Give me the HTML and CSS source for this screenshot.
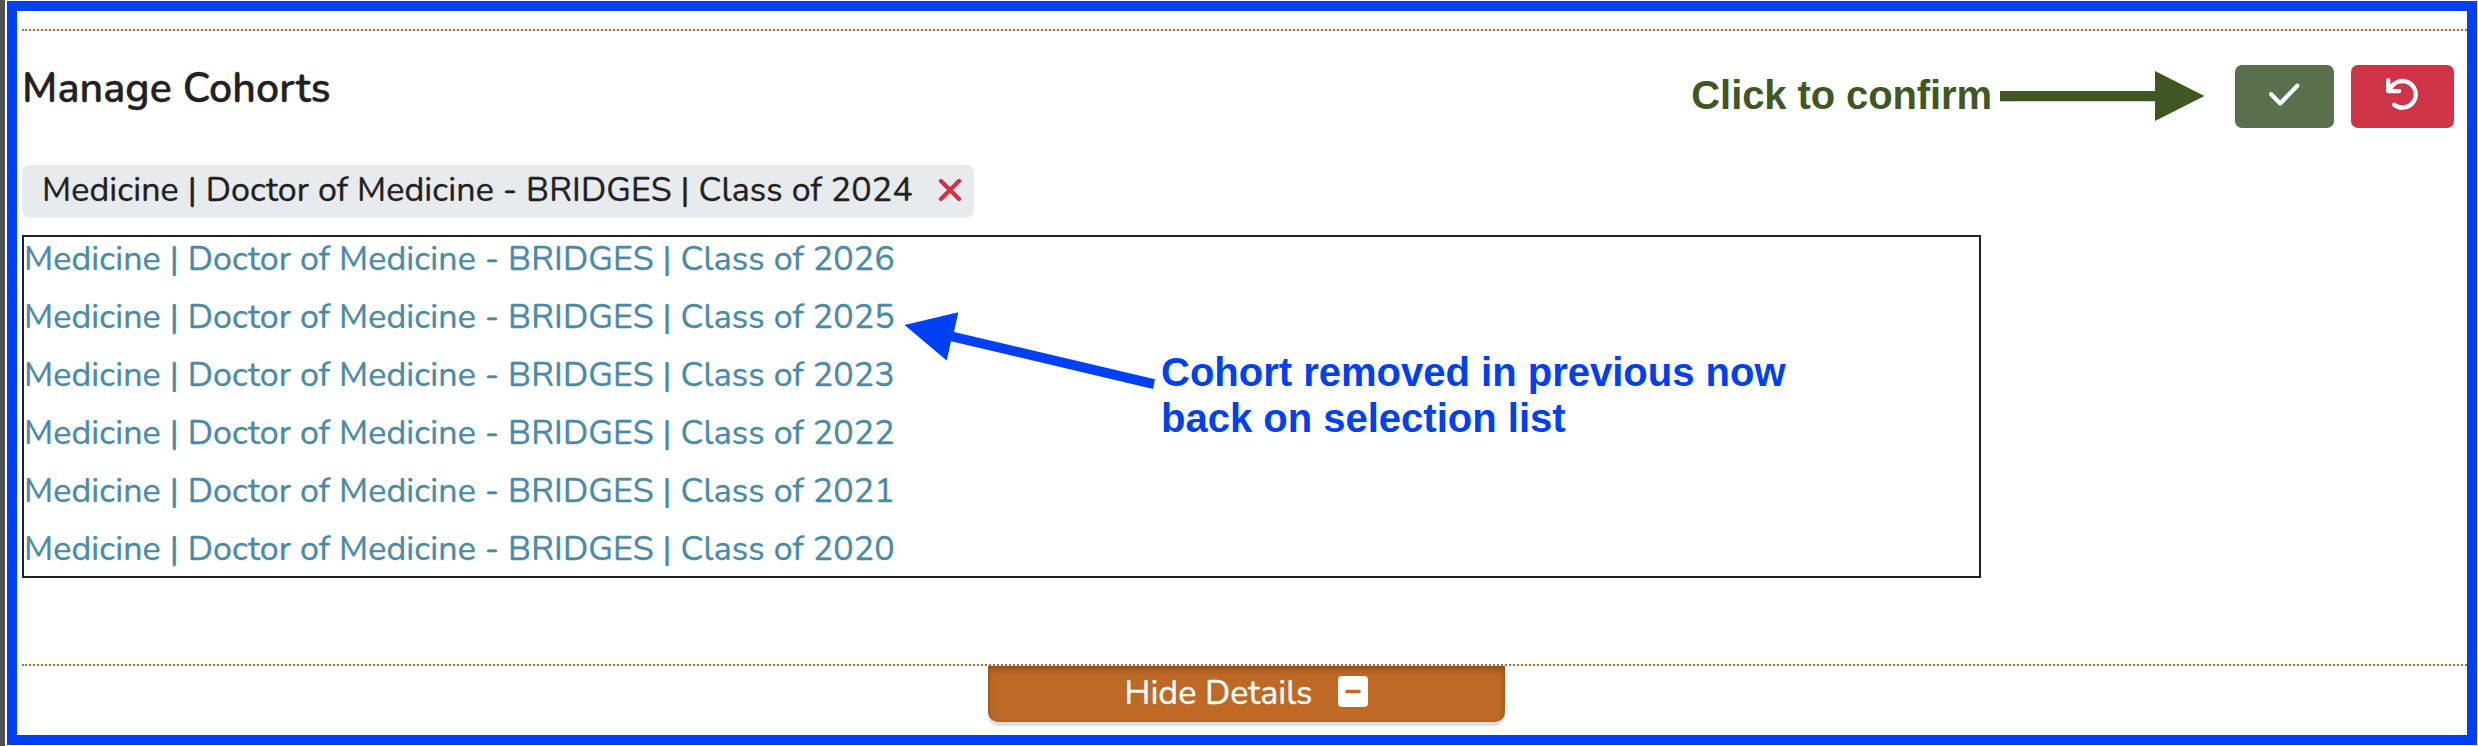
FILE: index.html
```html
<!DOCTYPE html>
<html lang="en">
<head>
<meta charset="utf-8">
<title>Manage Cohorts</title>
<link rel="stylesheet" href="styles.css">
</head>
<body>
<main class="frame">
  <section class="details">
    <header class="header">
      <h2 class="title">Manage Cohorts</h2>
      <div class="actions">
        <span class="hint">Click to confirm</span>
        <svg class="hint-arrow" width="205" height="50" viewBox="0 0 205 50"><path fill="#3f5724" d="M0 20h155V0l49.500 25L155 50V30.300H0z"/></svg>
        <button class="btn confirm" aria-label="Confirm"><svg width="40" height="40" viewBox="0 0 40 40"><path d="M6.200 19.300l9 9.200L32.300 10.800"/></svg></button>
        <button class="btn cancel" aria-label="Undo"><svg width="40" height="40" viewBox="0 0 40 40"><path d="M5.200 5.200v10.900h11M7 14.600A13.300 13.300 0 1 1 11.100 29.700"/></svg></button>
      </div>
    </header>
    <div class="tag"><span>Medicine | Doctor of Medicine - BRIDGES | Class of 2024</span><svg width="24" height="24" viewBox="0 0 24 24"><path d="M3 3l18 18M21 3L3 21"/></svg></div>
    <ul class="list">
      <li>Medicine | Doctor of Medicine - BRIDGES | Class of 2026</li>
      <li>Medicine | Doctor of Medicine - BRIDGES | Class of 2025</li>
      <li>Medicine | Doctor of Medicine - BRIDGES | Class of 2023</li>
      <li>Medicine | Doctor of Medicine - BRIDGES | Class of 2022</li>
      <li>Medicine | Doctor of Medicine - BRIDGES | Class of 2021</li>
      <li>Medicine | Doctor of Medicine - BRIDGES | Class of 2020</li>
    </ul>
  </section>
  <button class="toggle"><span>Hide Details</span><svg width="30" height="31" viewBox="0 0 30 31"><rect width="30" height="31" rx="4" fill="#fff"/><path d="M9 15.500h12" stroke="#be6926" stroke-width="3.600" stroke-linecap="round"/></svg></button>
</main>
<svg class="note-arrow" width="256" height="80" viewBox="900 310 256 80"><path fill="#0040f5" d="M904.500 325L958.300 312.200 954 332l201 47.300-2 9.700-202-47.800-4.300 19.400z"/></svg>
<p class="note">Cohort removed in previous now<br>back on selection list</p>
</body>
</html>
```
FILE: styles.css
```css
* { box-sizing: border-box; }
body {
  margin: 0;
  height: 746px;
  padding: 1px 1px 1px 2px;
  border-left: 5px solid #525252;
  background: #fff;
  color: #212121;
  font-family: Nunito, Lato, sans-serif;
  font-size: 34px;
  -webkit-text-stroke: 0.35px currentColor;
  overflow: hidden;
}
.frame {
  height: 744px;
  padding: 18px 0 0 5px;
  border: 10px solid #0040f5;
}
.details {
  height: 637px;
  border-top: 2px dotted #be6926;
  border-bottom: 2px dotted #be6926;
}
.header {
  display: flex;
  justify-content: space-between;
  height: 134px;
  padding: 34px 13px 0 0;
}
.title {
  margin: 0;
  font-size: 41px;
  line-height: 48px;
  font-weight: 600;
  letter-spacing: 0.080px;
  white-space: nowrap;
}
.actions { display: flex; align-items: flex-start; }
.hint {
  padding-top: 7px;
  font: bold 40px/46px "Liberation Sans", Arial, sans-serif;
  letter-spacing: -0.1px;
  -webkit-text-stroke: 0;
  color: #3f5724;
}
.hint-arrow { margin: 6px 30px 0 8px; }
.btn {
  display: flex;
  align-items: center;
  justify-content: center;
  width: 99px;
  height: 63px;
  padding: 0 0 4px;
  border: 0;
  border-radius: 7px;
  background: #5a704c;
}
.btn svg, .tag svg {
  fill: none;
  stroke: #fff;
  stroke-width: 4.300px;
  stroke-linecap: round;
  stroke-linejoin: round;
}
.cancel { width: 103px; margin-left: 17px; background: #ce3348; }
.tag {
  display: flex;
  align-items: center;
  justify-content: space-between;
  width: 952px;
  height: 53px;
  padding: 0 12px 4px 20px;
  border-radius: 8px;
  background: #e8ebee;
  white-space: nowrap;
}
.tag span, .list li { letter-spacing: 0.110px; }
.tag span { padding-top: 1px; }
.tag svg { stroke: #ce3348; }
.list {
  width: 1959px;
  height: 343px;
  margin: 17px 0 0;
  padding: 0;
  border: 2px solid #212121;
  list-style: none;
  color: #4a8aa6;
}
.list li { height: 58px; line-height: 44px; white-space: nowrap; }
.toggle {
  display: flex;
  justify-content: center;
  align-items: flex-start;
  gap: 26px;
  width: 517px;
  height: 56px;
  margin: 0 0 0 966px;
  padding: 10px 0 0;
  border: 0;
  border-radius: 0 0 10px 10px;
  background: #be6926;
  box-shadow: 0 4px 0 #e0e0e0, inset 0 3px 6px rgba(0, 0, 0, 0.3);
  color: #fff;
  font: inherit;
  line-height: 35px;
}
.note-arrow { position: absolute; left: 900px; top: 310px; }
.note {
  position: absolute;
  left: 1161px;
  top: 349px;
  margin: 0;
  font: bold 40px/46px "Liberation Sans", Arial, sans-serif;
  -webkit-text-stroke: 0;
  color: #0040f5;
  white-space: nowrap;
}
```
